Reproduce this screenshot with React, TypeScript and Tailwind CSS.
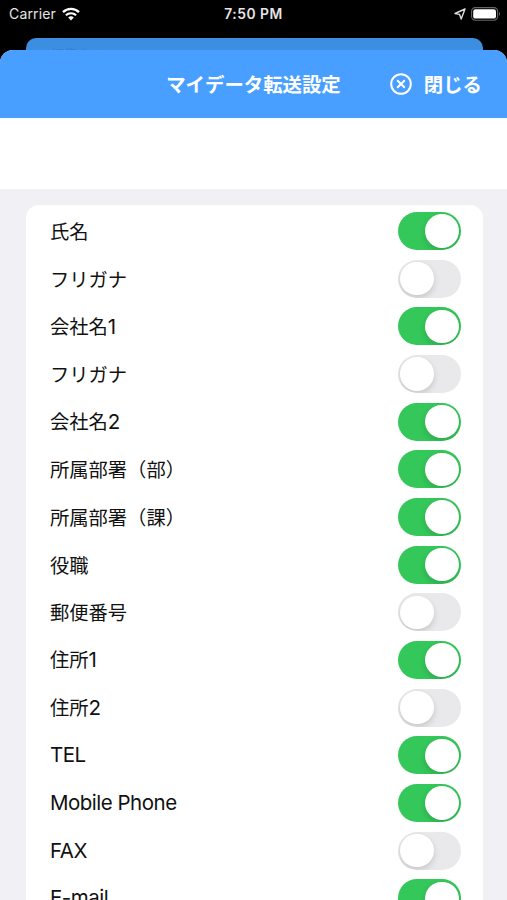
import React, { useState } from 'react';
import clsx from 'clsx';

interface Field {
  id: string;
  label: string;
  suffix?: string;
  enabled: boolean;
}

// suffix holds the latin part of a label, it is set in a different face
const initialFields: Field[] = [
  { id: 'name', label: '氏名', enabled: true },
  { id: 'nameKana', label: 'フリガナ', enabled: false },
  { id: 'company1', label: '会社名', suffix: '1', enabled: true },
  { id: 'companyKana', label: 'フリガナ', enabled: false },
  { id: 'company2', label: '会社名', suffix: '2', enabled: true },
  { id: 'department', label: '所属部署（部）', enabled: true },
  { id: 'section', label: '所属部署（課）', enabled: true },
  { id: 'position', label: '役職', enabled: true },
  { id: 'zip', label: '郵便番号', enabled: false },
  { id: 'address1', label: '住所', suffix: '1', enabled: true },
  { id: 'address2', label: '住所', suffix: '2', enabled: false },
  { id: 'tel', label: '', suffix: 'TEL', enabled: true },
  { id: 'mobile', label: '', suffix: 'Mobile Phone', enabled: true },
  { id: 'fax', label: '', suffix: 'FAX', enabled: false },
  { id: 'email', label: '', suffix: 'E-mail', enabled: true },
];

const StatusBar: React.FC = () => (
  <div className="grid h-[38px] grid-cols-3 items-start px-[9px] pt-1 text-[14px] leading-5 text-white/90">
    <div className="flex items-center gap-[6px]">
      <span className="tracking-[0.15px]">Carrier</span>
      <svg width="18" height="14" viewBox="0 0 18 14" fill="none">
        <path d="M1 5.1a11.6 11.6 0 0 1 16 0" stroke="white" strokeWidth="2.4" />
        <path d="M3.9 8.3a7.4 7.4 0 0 1 10.2 0" stroke="white" strokeWidth="2.2" />
        <path d="M9 13.4 6.2 10.5a4 4 0 0 1 5.6 0z" fill="white" />
      </svg>
    </div>
    <span className="text-center text-[13.8px] font-semibold tracking-[0.5px]">
      7:50 PM
    </span>
    <div className="flex h-5 items-center justify-end gap-[5px]">
      <svg width="12" height="12" viewBox="0 0 12 12" fill="none">
        <path
          d="M11 1 1 5.5l4.6.9L7.2 11z"
          stroke="#ddd"
          strokeWidth="1.4"
          strokeLinejoin="round"
        />
      </svg>
      <svg width="30" height="14" viewBox="0 0 30 14" className="-mr-[3px]">
        <rect x="0.6" y="0.6" width="26" height="12.6" rx="3.6" fill="none" stroke="#666" strokeWidth="1.1" />
        <rect x="2.2" y="2.2" width="22.8" height="9.4" rx="2.2" fill="white" />
        <path d="M28 4.8q2 2.1 0 4.2z" fill="#666" />
      </svg>
    </div>
  </div>
);

const CloseIcon: React.FC = () => (
  <svg width="22" height="22" viewBox="0 0 22 22" fill="none" stroke="white" strokeWidth="2">
    <circle cx="11" cy="11" r="9.8" />
    <path d="m7.2 7.2 7.6 7.6m0-7.6-7.6 7.6" />
  </svg>
);

const Toggle: React.FC<{ checked: boolean; onChange: () => void }> = ({
  checked,
  onChange,
}) => (
  <button
    role="switch"
    aria-checked={checked}
    onClick={onChange}
    className={clsx(
      'flex h-[38px] w-[63px] items-center overflow-hidden rounded-full px-[2.4px]',
      checked ? 'justify-end bg-[#34c759]' : 'justify-start bg-[#e9e9eb]'
    )}
  >
    <span className="size-[33.4px] rounded-full bg-white shadow-[0_3px_6px_rgba(0,0,0,0.15)]" />
  </button>
);

const App: React.FC = () => {
  const [fields, setFields] = useState<Field[]>(initialFields);

  const toggleField = (id: string) => {
    setFields((prev) =>
      prev.map((field) =>
        field.id === id ? { ...field, enabled: !field.enabled } : field
      )
    );
  };

  return (
    <div
      lang="ja"
      className="flex h-[900px] w-[507px] flex-col overflow-hidden bg-black font-['Inter','Noto_Sans_CJK_JP',sans-serif]"
    >
      <StatusBar />
      {/* screen stacked behind the sheet */}
      <div className="mr-[24px] ml-[26px] h-3 shrink-0 overflow-hidden rounded-t-[10px] bg-[#3b8ee0] pt-[7px] pl-[25px] text-[13px] leading-[19px] text-[#3280cf]">
        編集する
      </div>
      <div className="flex min-h-0 flex-1 flex-col overflow-hidden rounded-t-[13px] bg-[#f0f0f5]">
        <header className="grid h-[68px] shrink-0 grid-cols-[1fr_auto_1fr] items-center bg-[#489fff] font-['Noto_Sans_CJK_JP',sans-serif] text-[19.4px] font-bold text-white">
          <h1 className="col-start-2 leading-7">マイデータ転送設定</h1>
          <button className="flex items-center justify-end gap-[11.5px] pr-[25px] leading-7">
            <CloseIcon />
            <span>閉じる</span>
          </button>
        </header>
        <div className="h-[71px] shrink-0 bg-white" />
        <ul className="mt-4 mr-[24px] ml-[26px] rounded-t-[13px] bg-white pt-[2.2px] pr-[22px] pl-[24px]">
          {fields.map((field) => (
            <li
              key={field.id}
              className="flex h-[47.66px] items-center justify-between text-[#111]"
            >
              <div className="flex items-baseline leading-7">
                {field.label && (
                  <span className="font-['Noto_Sans_CJK_JP',sans-serif] text-[19.3px]">
                    {field.label}
                  </span>
                )}
                {field.suffix && (
                  <span className="text-[20.5px] tracking-[-0.5px]">
                    {field.suffix}
                  </span>
                )}
              </div>
              <Toggle
                checked={field.enabled}
                onChange={() => toggleField(field.id)}
              />
            </li>
          ))}
        </ul>
      </div>
    </div>
  );
};

export default App;
